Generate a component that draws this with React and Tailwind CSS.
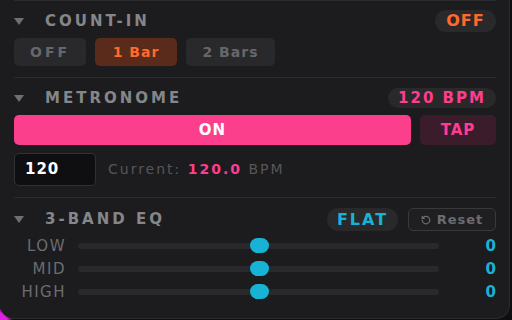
import React from 'react';
import { RotateCcw } from 'lucide-react';

const font = { fontFamily: '"DejaVu Sans", "Liberation Sans", sans-serif' };

function Caret() {
  return (
    <div className="w-[31px] flex items-center">
      <svg width="10" height="7" viewBox="0 0 10 7">
        <path d="M0 0 L10 0 L5 7 Z" fill="#6f6f73" />
      </svg>
    </div>
  );
}

function SectionTitle({ children }) {
  return (
    <div className="flex items-center">
      <Caret />
      <span className="text-[15px] font-bold tracking-[3px] text-[#86868a] leading-none">{children}</span>
    </div>
  );
}

function EqRow({ label }) {
  return (
    <div className="flex items-center h-[22px]">
      <div className="w-[52px] text-right text-[15px] tracking-[1.5px] text-[#6c6c70] leading-none">{label}</div>
      <div className="ml-[12px] relative w-[361px] h-[6px] rounded-full bg-[#29292b]">
        <div className="absolute left-[172px] top-[-5px] w-[19px] h-[15px] rounded-full bg-[#17b3d6]" />
      </div>
      <div className="flex-1 text-right text-[15px] font-bold text-[#17b3d6] leading-none">0</div>
    </div>
  );
}

export default function App() {
  return (
    <div
      className="w-[512px] h-[320px] overflow-hidden bg-[radial-gradient(circle_at_0%_100%,#e21ee6_0px,#e21ee6_7px,#0e0e10_13px)]"
      style={font}
    >
      <div className="w-[510px] h-[319px] bg-[#1c1c1e] rounded-b-[14px] border-r border-b border-[#2c2c2f] pl-[14px] pr-[13px] flex flex-col">
        {/* count-in */}
        <div className="border-t border-[#2b2b2e] pt-[9px] pb-[11px]">
          <div className="flex items-center justify-between h-[22px]">
            <SectionTitle>COUNT-IN</SectionTitle>
            <div className="w-[61px] h-[22px] rounded-full bg-[#29292b] flex items-center justify-center text-[16px] font-bold tracking-[1px] text-[#ff6a2b]">
              OFF
            </div>
          </div>
          <div className="mt-[6px] flex gap-[9px] h-[28px] text-[14px] font-bold">
            <button className="w-[72px] rounded-[5px] bg-[#29292b] text-[#67676b] tracking-[3px]">OFF</button>
            <button className="w-[82px] rounded-[5px] bg-[#5a2b1b] text-[#ff6a2b] tracking-[1px]">1 Bar</button>
            <button className="w-[89px] rounded-[5px] bg-[#29292b] text-[#67676b] tracking-[1px]">2 Bars</button>
          </div>
        </div>

        {/* metronome */}
        <div className="border-t border-[#2b2b2e] pt-[10px] pb-[11px]">
          <div className="flex items-center justify-between h-[20px]">
            <SectionTitle>METRONOME</SectionTitle>
            <div className="w-[108px] h-[20px] rounded-full bg-[#29292b] flex items-center justify-center text-[15px] font-bold tracking-[2px] text-[#ff3d8f]">
              120 BPM
            </div>
          </div>
          <div className="mt-[7px] flex gap-[9px] h-[30px]">
            <button className="flex-1 rounded-[5px] bg-[#fb3f8c] text-white text-[15px] font-bold tracking-[1px]">ON</button>
            <button className="w-[76px] rounded-[5px] bg-[#3a1c2a] text-[#ff3d8f] text-[15px] font-bold tracking-[1px]">TAP</button>
          </div>
          <div className="mt-[8px] flex items-center gap-[12px]">
            <div className="w-[82px] h-[33px] rounded-[5px] bg-[#0f0f11] border border-[#313134] flex items-center pl-[10px] text-[15px] font-semibold tracking-[1px] text-white">
              120
            </div>
            <div className="text-[14px] tracking-[2px] text-[#56565a]">
              Current: <span className="font-bold text-[#ff3d8f]">120.0</span> BPM
            </div>
          </div>
        </div>

        {/* eq */}
        <div className="border-t border-[#2b2b2e] pt-[10px]">
          <div className="flex items-center justify-between h-[23px]">
            <SectionTitle>3-BAND EQ</SectionTitle>
            <div className="flex items-center gap-[10px]">
              <div className="w-[71px] h-[23px] rounded-full bg-[#29292b] flex items-center justify-center text-[16px] font-bold tracking-[2px] text-[#17b3d6]">
                FLAT
              </div>
              <button className="w-[88px] h-[23px] rounded-[5px] border border-[#39393c] bg-[#1f1f21] flex items-center justify-center gap-[6px] text-[13px] font-bold tracking-[1px] text-[#6c6c70]">
                <RotateCcw size={10} strokeWidth={3} />
                Reset
              </button>
            </div>
          </div>
          <div className="mt-[4px] flex flex-col gap-[1px]">
            <EqRow label="LOW" />
            <EqRow label="MID" />
            <EqRow label="HIGH" />
          </div>
        </div>
      </div>
    </div>
  );
}
